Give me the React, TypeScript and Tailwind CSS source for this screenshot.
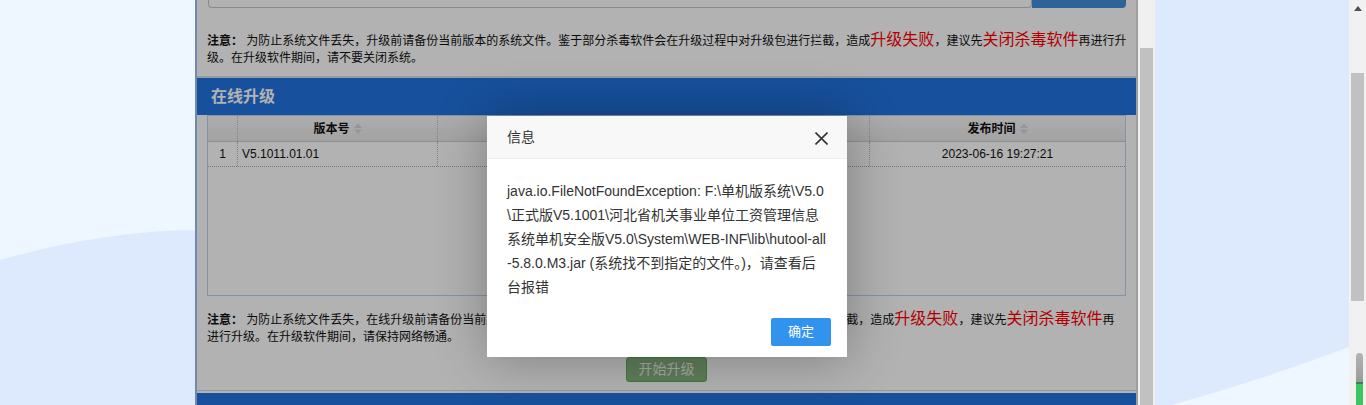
import React from "react";

const FONT = "font-['Liberation_Sans','Noto_Sans_CJK_SC',sans-serif]";

function SortIcon() {
  return (
    <svg width="8" height="11" viewBox="0 0 8 11" className="ml-[4px] shrink-0">
      <path d="M0 5 L4 0.5 L8 5 Z" fill="#d6d6d6" />
      <path d="M0 6.5 L4 11 L8 6.5 Z" fill="#d6d6d6" />
    </svg>
  );
}

function Notes({ lines }: { lines: React.ReactNode[] }) {
  return (
    <div className="px-[10px] text-[12px] leading-[18px] text-[#111]">
      {lines.map((l, i) => (
        <div key={i} className="h-[18px] whitespace-nowrap">
          {l}
        </div>
      ))}
    </div>
  );
}

function Red({ children }: { children: React.ReactNode }) {
  return <span className="text-[16px] leading-[18px] text-[#ff0000]">{children}</span>;
}

function UpgradeTable() {
  return (
    <div className="mx-[10px] h-[181px] border border-[#bcd3f3] bg-white text-[12px] text-[#111]">
      {/* header */}
      <div className="grid h-[26px] grid-cols-[30px_200px_432px_1fr] border-b border-[#cfcfcf] bg-gradient-to-b from-[#f8f8f8] to-[#e9e9e9] font-bold">
        <div className="border-r border-dotted border-[#bdbdbd]" />
        <div className="flex items-center justify-center border-r border-dotted border-[#bdbdbd]">
          版本号
          <SortIcon />
        </div>
        <div className="flex items-center justify-center border-r border-dotted border-[#bdbdbd]">
          更新说明
          <SortIcon />
        </div>
        <div className="flex items-center justify-center">
          发布时间
          <SortIcon />
        </div>
      </div>
      {/* rows */}
      <div className="grid h-[25px] grid-cols-[30px_200px_432px_1fr] border-b border-dotted border-[#a9a9a9]">
        <div className="flex items-center justify-center border-r border-dotted border-[#bdbdbd]">1</div>
        <div className="flex items-center border-r border-dotted border-[#bdbdbd] pl-[4px]">V5.1011.01.01</div>
        <div className="border-r border-dotted border-[#bdbdbd]" />
        <div className="flex items-center justify-center">2023-06-16 19:27:21</div>
      </div>
    </div>
  );
}

function FramePage() {
  return (
    <div className="h-[405px] border-r-2 border-[#e3e3e3] bg-white">
      {/* bottom edge of the file row, scrolled mostly out of view */}
      <div className="flex h-[8px] pl-[11px] pr-[10px]">
        <div className="flex-1 rounded-b-[4px] border-x border-b border-[#c6c6c6]" />
        <div className="w-[94px] rounded-br-[4px] bg-[#428fd8]" />
      </div>

      <div className="pt-[23px] pb-[9px]">
        <Notes
          lines={[
            <>
              <b>注意：</b> 为防止系统文件丢失，升级前请备份当前版本的系统文件。鉴于部分杀毒软件会在升级过程中对升级包进行拦截，造成
              <Red>升级失败</Red>，建议先<Red>关闭杀毒软件</Red>再进行升
            </>,
            <>级。在升级软件期间，请不要关闭系统。</>,
          ]}
        />
      </div>

      {/* 在线升级 */}
      <div className="border-t-2 border-[#d7dfe9]">
        <div className="h-[37px] bg-[#2173e0] pl-[14px] text-[16px] font-bold leading-[37px] text-white">
          在线升级
        </div>
        <UpgradeTable />
        <div className="pt-[14px]">
          <Notes
            lines={[
              <>
                <b>注意：</b> 为防止系统文件丢失，在线升级前请备份当前版本的系统文件。鉴于部分杀毒软件会在升级过程中对升级包进行拦截，造成
                <Red>升级失败</Red>，建议先<Red>关闭杀毒软件</Red>再
              </>,
              <>进行升级。在升级软件期间，请保持网络畅通。</>,
            ]}
          />
        </div>
        <div className="flex justify-center pt-[11px]">
          <button className="h-[25px] w-[81px] rounded-[3px] border border-[#5ab454] bg-[#88b581] text-[14px] text-[#eef4ea]">
            开始升级
          </button>
        </div>
      </div>

      <div className="mt-[8px] border-t border-[#d3dbe6] pt-[2px]">
        <div className="h-[37px] bg-[#2173e0]" />
      </div>
    </div>
  );
}

function Dialog() {
  const lines = [
    "java.io.FileNotFoundException: F:\\单机版系统\\V5.0",
    "\\正式版V5.1001\\河北省机关事业单位工资管理信息",
    "系统单机安全版V5.0\\System\\WEB-INF\\lib\\hutool-all",
    "-5.8.0.M3.jar (系统找不到指定的文件。)，请查看后",
    "台报错",
  ];
  return (
    <div className="absolute left-[487px] top-[116px] w-[360px] bg-white shadow-[1px_1px_50px_rgba(0,0,0,0.3)]">
      <div className="relative h-[43px] border-b border-[#eeeeee] bg-[#f8f8f8] pl-[20px] text-[14px] leading-[42px] text-[#333]">
        信息
        <svg width="13" height="13" viewBox="0 0 13 13" className="absolute right-[19px] top-[16px]">
          <path d="M0.5 0.5 L12.5 12.5 M12.5 0.5 L0.5 12.5" stroke="#333" strokeWidth="1.6" />
        </svg>
      </div>
      <div className="px-[20px] pt-[20px] pb-[19px] text-[14px] leading-[24px] text-[#333]">
        {lines.map((l) => (
          <div key={l} className="whitespace-nowrap">
            {l}
          </div>
        ))}
      </div>
      <div className="flex justify-end pr-[16px] pb-[11px]">
        <button className="h-[28px] w-[60px] rounded-[2px] bg-[#3193ee] text-[13px] text-white">确定</button>
      </div>
    </div>
  );
}

export default function App() {
  return (
    <div className={`relative h-[405px] w-[1366px] overflow-hidden bg-[#eef6ff] ${FONT}`}>
      {/* backdrop swoosh */}
      <svg className="absolute inset-0" width="1366" height="405" viewBox="0 0 1366 405">
        <path
          d="M0 260 Q102 231 195 230 L1150 -10 L1370 -10 L1370 340 L1349 347 Q1262 380 1168 406 L0 410 Z"
          fill="#dde9fd"
        />
      </svg>

      <div className="relative flex h-full">
        <div className="w-[195px] shrink-0" />

        {/* iframe window */}
        <div className="flex w-[960px] shrink-0 border-l-2 border-[#7189ae]">
          <div className="relative w-[941px]">
            <FramePage />
            <div className="absolute inset-0 bg-black/30" />
          </div>
          <div className="w-[17px] bg-[#f0f0f0] px-[2px] pt-[48px]">
            <div className="h-full bg-[#c1c1c1]" />
          </div>
        </div>

        <div className="flex-1" />

        {/* page scrollbar */}
        <div className="relative w-[17px] shrink-0 bg-[#f1f1f1]">
          <div className="flex h-[17px] items-center justify-center">
            <svg width="8" height="5" viewBox="0 0 8 5">
              <path d="M0 5 L4 0 L8 5 Z" fill="#505050" />
            </svg>
          </div>
          <div className="mx-[2px] mt-[56px] h-[228px] bg-[#c1c1c1]" />
          <div className="absolute left-[7px] top-[353px] flex w-[7px] flex-col">
            <div className="h-[29px] rounded-t-full bg-gradient-to-b from-[#b4b4b4] to-[#9a9a9a]" />
            <div className="h-[2px] bg-[#2f8a4b]" />
            <div className="h-[21px] bg-[#3fc463]" />
          </div>
        </div>
      </div>

      <Dialog />
    </div>
  );
}
